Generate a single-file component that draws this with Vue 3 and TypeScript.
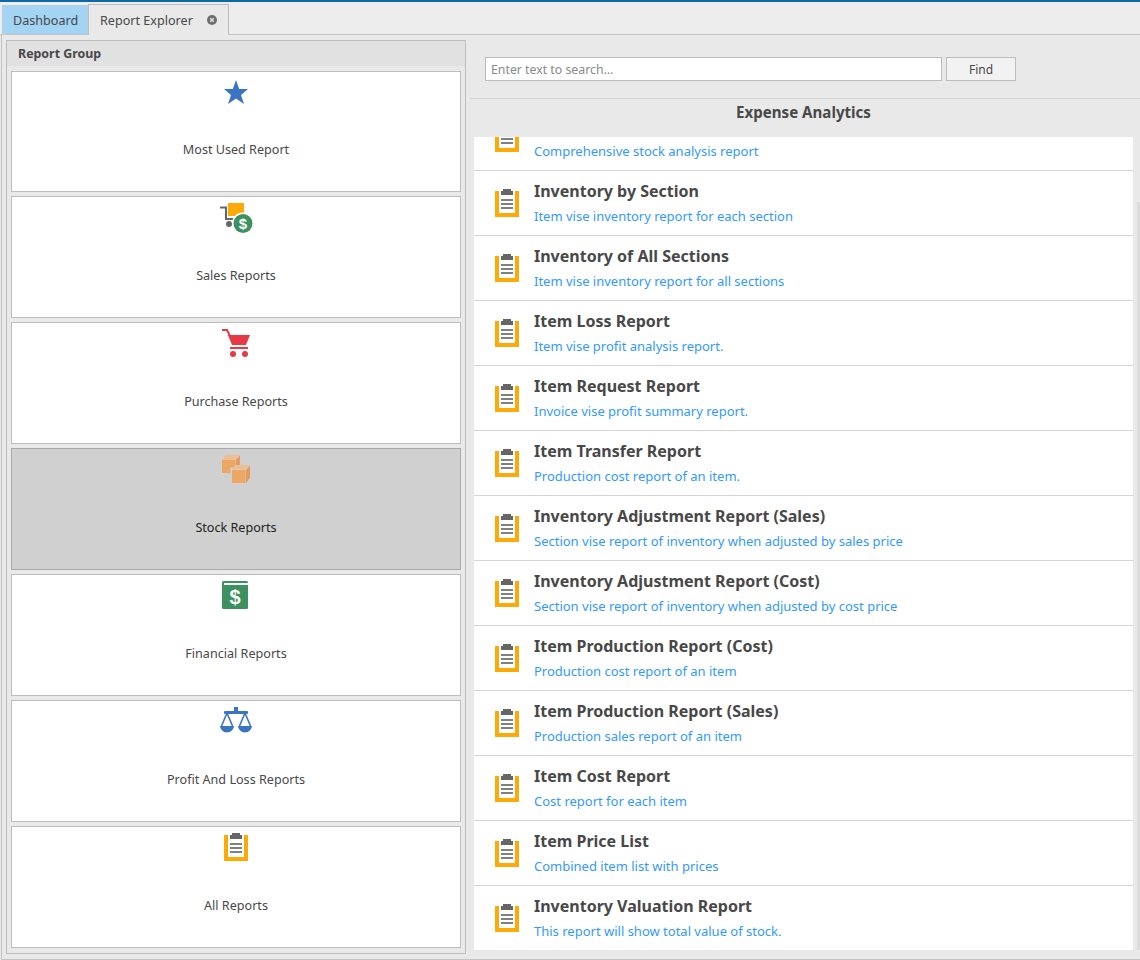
<script setup lang="ts">
interface Group { name: string; icon: string; active?: boolean }
interface Report { title: string; desc: string }

const groups: Group[] = [
  { name: 'Most Used Report', icon: 'star' },
  { name: 'Sales Reports', icon: 'sales' },
  { name: 'Purchase Reports', icon: 'cart' },
  { name: 'Stock Reports', icon: 'boxes', active: true },
  { name: 'Financial Reports', icon: 'book' },
  { name: 'Profit And Loss Reports', icon: 'scale' },
  { name: 'All Reports', icon: 'clip' },
]

const reports: Report[] = [
  { title: '', desc: 'Comprehensive stock analysis report' },
  { title: 'Inventory by Section', desc: 'Item vise inventory report for each section' },
  { title: 'Inventory of All Sections', desc: 'Item vise inventory report for all sections' },
  { title: 'Item Loss Report', desc: 'Item vise profit analysis report.' },
  { title: 'Item Request Report', desc: 'Invoice vise profit summary report.' },
  { title: 'Item Transfer Report', desc: 'Production cost report of an item.' },
  { title: 'Inventory Adjustment Report (Sales)', desc: 'Section vise report of inventory when adjusted by sales price' },
  { title: 'Inventory Adjustment Report (Cost)', desc: 'Section vise report of inventory when adjusted by cost price' },
  { title: 'Item Production Report (Cost)', desc: 'Production cost report of an item' },
  { title: 'Item Production Report (Sales)', desc: 'Production sales report of an item' },
  { title: 'Item Cost Report', desc: 'Cost report for each item' },
  { title: 'Item Price List', desc: 'Combined item list with prices' },
  { title: 'Inventory Valuation Report', desc: 'This report will show total value of stock.' },
]
</script>

<template>
  <div class="app">
    <div class="topline"></div>
    <div class="tabs">
      <div class="tab tab-home">Dashboard</div>
      <div class="tab tab-open">
        <span>Report Explorer</span>
        <svg class="close" width="10" height="10" viewBox="0 0 10 10">
          <circle cx="5" cy="5" r="5" fill="#6e6e6e" />
          <path d="M3.2 3.2l3.6 3.6M6.8 3.2l-3.6 3.6" stroke="#e9e9e9" stroke-width="1.3" />
        </svg>
      </div>
    </div>
    <div class="body">
      <section class="groups">
        <header class="groups-head">Report Group</header>
        <div class="cards">
          <div v-for="g in groups" :key="g.name" class="card" :class="{ active: g.active }">
            <svg class="card-icon" width="32" height="32" viewBox="0 0 32 32">
              <template v-if="g.icon === 'star'">
                <path d="M16 2l3.200 9H28l-7 6 3 9-8-5.500L8 26l3-9-7-6h8.800z" fill="#3b74c5" />
              </template>
              <template v-else-if="g.icon === 'sales'">
                <rect x="8" y="0" width="16" height="13" fill="#fcaa08" />
                <path d="M0 4.500h6V16H15" fill="none" stroke="#666" stroke-width="2" />
                <circle cx="9" cy="21" r="3" fill="#666" />
                <circle cx="23" cy="20.500" r="11" fill="#fff" />
                <circle cx="23" cy="20.500" r="9.500" fill="#3d9160" />
                <text x="23" y="26" class="dollar dollar-sm" text-anchor="middle">$</text>
              </template>
              <template v-else-if="g.icon === 'cart'">
                <path d="M2 1h5l5 10" fill="none" stroke="#e63946" stroke-width="2" />
                <path d="M8 6h22l-4 10H12z" fill="#e63946" />
                <rect x="10" y="18" width="18" height="2" fill="#e63946" />
                <circle cx="13" cy="25" r="3" fill="#e63946" />
                <circle cx="25" cy="25" r="3" fill="#e63946" />
              </template>
              <template v-else-if="g.icon === 'boxes'">
                <path d="M2 5l3.500-5H20l-5 5z" fill="#ebbf93" />
                <path d="M2 5h13v13H2z" fill="#eca765" />
                <path d="M15.500 5L20 .5V13l-4.500 5z" fill="#e89a5b" />
                <path d="M10.500 12.500h21V30h-21z" fill="#d0d0d0" />
                <path d="M12 14.500l3.500-4.500H30l-4.500 4.500z" fill="#ebbf93" />
                <path d="M12 15h13.500v13H12z" fill="#eca765" />
                <path d="M26 15l4-4.500V23l-4 5z" fill="#e89a5b" />
              </template>
              <template v-else-if="g.icon === 'book'">
                <rect x="2" y="0" width="26" height="28" rx="1.500" fill="#3d9160" />
                <rect x="4" y="2" width="24" height="2" fill="#fff" />
                <text x="15" y="22.500" class="dollar" text-anchor="middle">$</text>
              </template>
              <template v-else-if="g.icon === 'scale'">
                <g fill="#3b74c5">
                  <rect x="14" y="0" width="4" height="5" />
                  <rect x="4" y="4" width="24" height="3" rx="1" />
                  <path d="M0 19h14a7 6.500 0 0 1-14 0zM18 19h14a7 6.500 0 0 1-14 0z" />
                </g>
                <path d="M7 6L1.500 19M7 6l5.500 13M25 6l-5.500 13M25 6l5.500 13" fill="none" stroke="#3b74c5" stroke-width="1.600" />
              </template>
              <template v-else>
                <g transform="translate(0 -2)">
                  <path d="M4 4h4v22h16V4h4v26H4z" fill="#fcaa08" />
                  <rect x="8" y="4" width="16" height="22" fill="#fff" />
                  <path d="M12 2h8v2h2v4H10V4h2z" fill="#666" />
                  <path d="M10 12h12v2H10zM10 16h12v2H10zM10 20h12v2H10z" fill="#808080" />
                </g>
              </template>
            </svg>
            <div class="card-label">{{ g.name }}</div>
          </div>
        </div>
      </section>

      <section class="main">
        <div class="search">
          <input class="search-input" type="text" placeholder="Enter text to search..." />
          <button class="find" type="button">Find</button>
        </div>
        <h2 class="heading">Expense Analytics</h2>
        <div class="list-wrap">
          <div class="list">
            <div v-for="r in reports" :key="r.desc" class="row">
              <svg class="row-icon" width="32" height="32" viewBox="0 0 32 32">
                <path d="M4 4h4v22h16V4h4v26H4z" fill="#fcaa08" />
                <rect x="8" y="4" width="16" height="22" fill="#fff" />
                <path d="M12 2h8v2h2v4H10V4h2z" fill="#666" />
                <path d="M10 12h12v2H10zM10 16h12v2H10zM10 20h12v2H10z" fill="#808080" />
              </svg>
              <div class="row-text">
                <div class="row-title">{{ r.title }}</div>
                <div class="row-desc">{{ r.desc }}</div>
              </div>
            </div>
          </div>
          <div class="scroll"><div class="thumb"></div></div>
        </div>
      </section>
    </div>
  </div>
</template>

<style scoped>
.app {
  width: 1140px;
  height: 960px;
  overflow: hidden;
  display: flex;
  flex-direction: column;
  background: #e9e9e9;
  color: #484848;
  font-family: "Noto Sans", "Open Sans", sans-serif;
  font-size: 13px;
}
.topline { height: 2px; background: #0a6aa1; flex: none; }
.tabs {
  flex: none;
  display: flex;
  align-items: flex-end;
  padding-left: 2px;
  background: #ededed;
  border-bottom: 1px solid #c4c4c4;
  box-sizing: border-box;
  height: 33px;
  font-size: 12.6px;
}
.tab { box-sizing: border-box; display: flex; align-items: center; }
.tab-home {
  width: 86px;
  height: 29px;
  padding-left: 10px;
  background: #a3d4f4;
  border: 1px solid #b5cfe0;
  border-bottom: 0;
}
.tab-open {
  width: 141px;
  height: 31px;
  margin-bottom: -1px;
  padding-left: 11px;
  background: #e9e9e9;
  border: 1px solid #bdbdbd;
  border-bottom: 0;
}
.close { margin-left: 14px; }
.body {
  flex: 1;
  min-height: 0;
  display: flex;
  box-sizing: border-box;
  margin-left: 1px;
  border-left: 1px solid #c4c4c4;
  border-bottom: 1px solid #c4c4c4;
  padding: 5px 0 5px 4px;
}
.groups {
  width: 460px;
  flex: none;
  box-sizing: border-box;
  border: 1px solid #bdbdbd;
  display: flex;
  flex-direction: column;
}
.groups-head {
  height: 25px;
  flex: none;
  background: #e1e1e1;
  padding-left: 11px;
  line-height: 26px;
  font-size: 12.4px;
  font-weight: 700;
}
.cards {
  flex: 1;
  padding: 5px 4px 0;
  display: flex;
  flex-direction: column;
  gap: 4px;
}
.card {
  height: 122px;
  flex: none;
  box-sizing: border-box;
  background: #fff;
  border: 1px solid #bdbdbd;
  display: flex;
  flex-direction: column;
  align-items: center;
  padding-top: 6px;
  font-size: 12.6px;
}
.card:first-child { height: 121px; }
.card.active { background: #d0d0d0; border-color: #a8a8a8; color: #222; }
.card-icon { overflow: visible; display: block; }
.card-label { margin-top: 32px; line-height: 18px; }
.card:first-child .card-label { margin-top: 31px; }
.dollar {
  fill: #fff;
  font-family: "Liberation Sans", sans-serif;
  font-weight: 700;
  font-size: 20px;
}
.dollar-sm { font-size: 15px; }
.main {
  flex: 1;
  min-width: 0;
  display: flex;
  flex-direction: column;
  padding-left: 4px;
}
.search {
  height: 60px;
  flex: none;
  box-sizing: border-box;
  padding: 18px 0 0 15px;
  margin-top: -1px;
  display: flex;
  gap: 4px;
  border-bottom: 1px solid #d4d4d4;
}
.search-input {
  width: 457px;
  height: 24px;
  box-sizing: border-box;
  border: 1px solid #bdbdbd;
  background: #fff;
  padding: 0 5px;
  font: inherit;
  font-size: 12.3px;
  outline: none;
}
.search-input::placeholder { color: #8a8a8a; opacity: 1; }
.find {
  width: 70px;
  height: 24px;
  box-sizing: border-box;
  border: 1px solid #bdbdbd;
  background: #f2f2f2;
  color: #484848;
  font: inherit;
  font-size: 12px;
  padding: 0;
}
.heading {
  height: 38px;
  flex: none;
  margin: 0;
  box-sizing: border-box;
  padding: 3px 0 0 4px;
  width: 663px;
  text-align: center;
  font-size: 15.1px;
  font-weight: 700;
  line-height: 20px;
}
.list-wrap { flex: 1; min-height: 0; display: flex; }
.list {
  width: 659px;
  margin-left: 4px;
  height: 813px;
  overflow: hidden;
  background: #fff;
  flex: none;
}
.row {
  height: 65px;
  box-sizing: border-box;
  display: flex;
  border-bottom: 1px solid #d4d4d4;
  padding-left: 17px;
}
.row:first-child { margin-top: -31px; }
.row:last-child { border-bottom: 0; }
.row-icon { flex: none; margin-top: 16px; }
.row-text { margin-left: 11px; padding-top: 7px; }
.row-title { font-size: 16px; font-weight: 700; line-height: 26px; min-height: 26px; }
.row-desc { color: #3399ff; line-height: 24px; }
.scroll { width: 7px; display: flex; justify-content: flex-end; }
.thumb { width: 3px; height: 748px; margin-top: 65px; background: #dcdcdc; }
</style>
